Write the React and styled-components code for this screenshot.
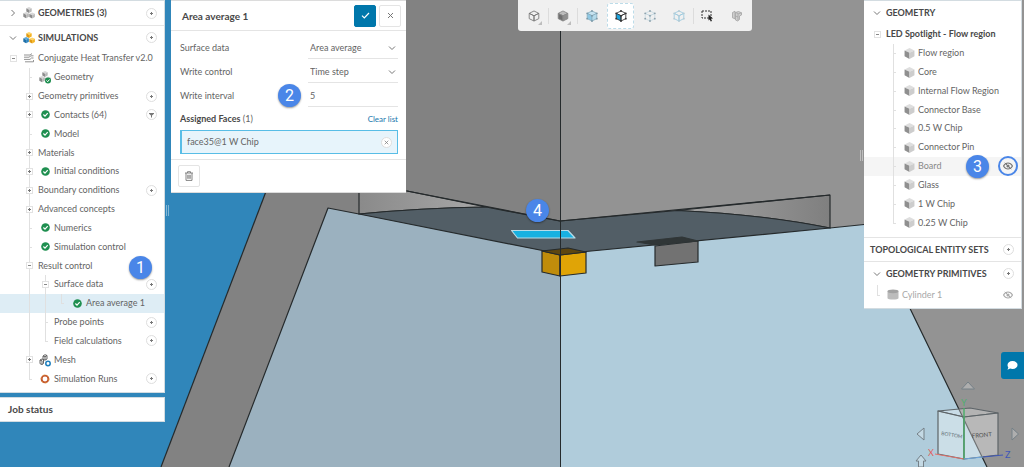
import styled, { createGlobalStyle, css } from 'styled-components'
import { useState } from 'react'

const colors = {
  text: '#646464',
  strong: '#484848',
  line: '#e4e4e4',
  guide: '#e0e0e0',
  accent: '#0077ab',
  badge: '#4a86e8',
  ok: '#1f8f50',
}

const GlobalStyle = createGlobalStyle`
  * {
    box-sizing: border-box;
  }
  body {
    margin: 0;
    font-family: Lato, 'Liberation Sans', sans-serif;
    font-size: 9px;
    line-height: 12px;
    color: ${colors.text};
    background: #3086ba;
  }
  button, input, select {
    font: inherit;
    color: inherit;
    margin: 0;
    padding: 0;
  }
`

const Page = styled.div`
  position: relative;
  display: flex;
  align-items: flex-start;
  min-height: 100vh;
  overflow: hidden;
`

const Scene = styled.svg`
  position: absolute;
  inset: 0;
  width: 100%;
  height: 100%;
`

const Sidebar = styled.aside`
  position: relative;
  flex: none;
  width: 165px;
  display: flex;
  flex-direction: column;
  gap: 4px;
`

const Panel = styled.section`
  position: relative;
  background: #fff;
  border: 0 solid #d3dce1;
  border-width: 1px 1px 1px 0;
`

const TreePanel = styled(Panel)`
  padding-bottom: 4px;
`

const GeometryPanel = styled(Panel)`
  flex: none;
  width: 158px;
  margin-right: 2px;
  padding-bottom: 4px;
`

const JobStatus = styled(Panel)`
  height: 25px;
  padding: 5px 8px;
  font-size: 10px;
  font-weight: 700;
  color: ${colors.strong};
`

const SectionHead = styled.header`
  display: flex;
  align-items: center;
  height: 24px;
  padding: 0 7px 0 5px;
  color: ${colors.strong};
  font-weight: 700;
  border-top: ${p => (p.$ruled ? `1px solid ${colors.line}` : 'none')};
`

const SectionTitle = styled.h2`
  flex: 1;
  margin: 0 0 0 1px;
  font-size: 9px;
  font-weight: 700;
  white-space: nowrap;
`

const Rows = styled.ul`
  display: grid;
  grid-auto-rows: 1fr;
  height: ${p => p.$height}px;
  margin: 0;
  padding: 0;
  list-style: none;
  & + header {
    margin-top: 5px;
  }
`

const Row = styled.li`
  position: relative;
  display: flex;
  align-items: stretch;
  min-height: 0;
  padding: 0 7px 0 5px;
  white-space: nowrap;
  font-weight: ${p => (p.$bold ? 700 : 400)};
  color: ${p => (p.$hover ? '#888888' : p.$muted ? '#a8a8a8' : p.$bold ? colors.strong : colors.text)};
  background: ${p => (p.$selected ? '#deedf5' : p.$hover ? '#f5f5f5' : 'none')};
`

const Cell = styled.span`
  position: relative;
  flex: none;
  display: flex;
  align-items: center;
  justify-content: center;
  width: 16px;
  ${p => p.$guide && css`
    &::before {
      content: '';
      position: absolute;
      left: 8px;
      top: 0;
      bottom: ${p.$guide === 'elbow' ? '50%' : 0};
      border-left: 1px solid ${colors.guide};
    }
  `}
  ${p => (p.$guide === 'elbow' || p.$guide === 'tee') && css`
    &::after {
      content: '';
      position: absolute;
      left: 8px;
      top: 50%;
      width: 3px;
      border-top: 1px solid ${colors.guide};
    }
  `}
`

const Label = styled.span`
  flex: 1;
  align-self: center;
  margin-left: 1px;
`

const Expander = styled.button`
  position: relative;
  z-index: 1;
  display: flex;
  align-items: center;
  justify-content: center;
  width: 7px;
  height: 7px;
  border: 1px solid #e2e2e2;
  background: #fff;
`

const RoundButton = styled.button`
  flex: none;
  align-self: center;
  display: flex;
  align-items: center;
  justify-content: center;
  width: 11px;
  height: 11px;
  border: 1px solid #dedede;
  border-radius: 50%;
  background: #fff;
  color: #666;
`

const EyeButton = styled.button`
  flex: none;
  align-self: center;
  display: flex;
  align-items: center;
  justify-content: center;
  width: 12px;
  height: 12px;
  border: none;
  border-radius: 50%;
  background: none;
  color: ${p => (p.$ringed ? '#777' : '#aaa')};
  outline: ${p => (p.$ringed ? `2px solid ${colors.badge}` : 'none')};
  outline-offset: 2px;
`

const ChevronButton = styled.button`
  display: flex;
  align-items: center;
  justify-content: center;
  width: 16px;
  height: 16px;
  border: none;
  background: none;
`

const Badge = styled.span`
  position: absolute;
  z-index: 3;
  left: ${p => p.$left}px;
  top: ${p => p.$top}px;
  width: 23px;
  height: 23px;
  border-radius: 50%;
  background: ${colors.badge};
  box-shadow: 0 1px 2px rgba(0, 0, 0, 0.4);
  color: #fff;
  font: 400 16px/23px Roboto, sans-serif;
  text-align: center;
`

const Splitter = styled.div`
  position: absolute;
  ${p => p.$side}: -4px;
  top: ${p => p.$top}px;
  width: 3px;
  height: 11px;
  border: 0 solid rgba(255, 255, 255, 0.4);
  border-width: 0 1px;
`

const Dialog = styled.form`
  position: relative;
  flex: none;
  width: 235px;
  margin-left: 6px;
  background: #fff;
  border: 1px solid #dcdcdc;
  border-width: 1px 0;
`

const DialogHead = styled.header`
  display: flex;
  align-items: center;
  gap: 3px;
  height: 30px;
  padding: 0 5px 0 11px;
  border-bottom: 1px solid ${colors.line};
`

const DialogTitle = styled.h1`
  flex: 1;
  margin: 0;
  font-size: 10px;
  font-weight: 700;
  color: ${colors.strong};
`

const SquareButton = styled.button`
  display: flex;
  align-items: center;
  justify-content: center;
  width: 22px;
  height: 22px;
  border: 1px solid ${p => (p.$primary ? colors.accent : colors.line)};
  border-radius: 2px;
  background: ${p => (p.$primary ? colors.accent : '#fff')};
  color: ${p => (p.$primary ? '#fff' : '#777')};
`

const Fields = styled.div`
  padding: 5px 8px 0 9px;
`

const Field = styled.div`
  position: relative;
  display: flex;
  align-items: center;
  justify-content: space-between;
  height: 24px;
`

const Control = styled.div`
  position: relative;
  display: flex;
  align-items: center;
  width: 90px;
  height: 22px;
  border-bottom: 1px solid ${colors.line};
  svg {
    position: absolute;
    right: 2px;
    pointer-events: none;
  }
  select, input {
    width: 100%;
    height: 20px;
    padding-left: 2px;
    border: none;
    outline: none;
    background: none;
    appearance: none;
  }
`

const Assigned = styled.div`
  display: flex;
  align-items: center;
  justify-content: space-between;
  height: 22px;
  strong {
    color: ${colors.strong};
  }
`

const ClearLink = styled.a`
  font-size: 8px;
  color: #2077ad;
  text-decoration: none;
`

const Face = styled.div`
  display: flex;
  align-items: center;
  justify-content: space-between;
  height: 24px;
  padding: 0 5px;
  border: 1px solid #58bde6;
  border-left-width: 2px;
  background: #e7f4fb;
`

const DialogFoot = styled.footer`
  margin-top: 5px;
  padding: 5px 7px;
  border-top: 1px solid ${colors.line};
`

const Viewport = styled.main`
  position: relative;
  flex: 1;
  display: flex;
  justify-content: center;
`

const Toolbar = styled.div`
  display: flex;
  align-items: center;
  height: 31px;
  padding: 0 1px;
  border-radius: 0 0 3px 3px;
  background: #f0f0f0;
`

const Tool = styled.button`
  position: relative;
  display: flex;
  align-items: center;
  justify-content: center;
  width: 27px;
  height: 26px;
  margin: 0 1px;
  border: 1px ${p => (p.$active ? 'dashed #bcdce9' : 'solid transparent')};
  border-radius: 3px;
  background: ${p => (p.$active ? '#fff' : 'none')};
  ${p => p.$menu && css`
    &::after {
      content: '';
      position: absolute;
      right: 4px;
      bottom: 3px;
      border: 2px solid #bdbdbd;
      border-top-color: transparent;
      border-left-color: transparent;
    }
  `}
  ${p => p.$split && css`
    &::before {
      content: '';
      position: absolute;
      right: -3px;
      height: 16px;
      border-left: 1px solid #dcdcdc;
    }
  `}
`

const ChatButton = styled.button`
  position: absolute;
  right: 0;
  bottom: 88px;
  display: flex;
  align-items: center;
  justify-content: center;
  width: 23px;
  height: 27px;
  border: none;
  border-radius: 3px 0 0 3px;
  background: ${colors.accent};
`

const ViewCube = styled.svg`
  position: absolute;
  right: 0;
  bottom: 0;
`

const Plus = () => (
  <svg width="5" height="5" viewBox="0 0 5 5" stroke="#777"><path d="M1 2.500H4M2.500 1V4" /></svg>
)

const Minus = () => (
  <svg width="5" height="5" viewBox="0 0 5 5" stroke="#888"><path d="M1 2.500H4" /></svg>
)

const Chevron = ({ right }) => (
  <svg width="8" height="8" viewBox="0 0 8 8" fill="none" stroke="#777" strokeWidth="1">
    <path d={right ? 'M2.500 1L5.500 4L2.500 7' : 'M1 2.500L4 5.500L7 2.500'} />
  </svg>
)

const Cube = ({ x = 0, y = 0, s = 1, tones = ['#d6d6d6', '#8c8c8c', '#b9b9b9'] }) => (
  <g transform={`translate(${x} ${y}) scale(${s})`}>
    <path d="M5 0L9.500 2.200L5 4.400L.5 2.200Z" fill={tones[0]} />
    <path d="M.5 2.200L5 4.400V10L.5 7.600Z" fill={tones[1]} />
    <path d="M9.500 2.200L5 4.400V10L9.500 7.600Z" fill={tones[2]} />
  </g>
)

const PartIcon = () => (
  <svg width="11" height="11" viewBox="0 0 10 10"><Cube tones={['#dedede', '#8f8f8f', '#cdcdcd']} /></svg>
)

const CubesIcon = ({ tones, done }) => (
  <svg width="12" height="12" viewBox="0 0 12 12" overflow="visible">
    <Cube x={3} y={0} s={0.6} tones={tones && tones[0]} />
    <Cube x={0} y={5} s={0.62} tones={tones && tones[1]} />
    <Cube x={6} y={5.4} s={0.62} tones={tones && tones[2]} />
    {done && (
      <g>
        <circle cx="9" cy="9.500" r="3" fill={colors.ok} />
        <path d="M7.500 9.500L8.700 10.700L10.500 8.500" fill="none" stroke="#fff" />
      </g>
    )}
  </svg>
)

const blues = ['#5ba9d6', '#1f6fa8', '#2f86c0']
const yellows = ['#ffd467', '#e09a12', '#f4b323']

const CheckIcon = () => (
  <svg width="9" height="9" viewBox="0 0 9 9">
    <circle cx="4.500" cy="4.500" r="4.300" fill={colors.ok} />
    <path d="M2.400 4.500L4 6.100L6.700 3.200" fill="none" stroke="#fff" strokeWidth="1.200" />
  </svg>
)

const FlowIcon = () => (
  <svg width="10" height="10" viewBox="0 0 10 10" fill="none" stroke="#777" strokeWidth=".8">
    <path d="M0 2H6L8 .6M0 4.200H5L7 2.800H9.500M0 6.400H6L7.500 5H9.500M1 8.800H9.500V7" />
  </svg>
)

const MeshIcon = () => (
  <svg width="12" height="12" viewBox="0 0 12 12" fill="none" stroke="#555" strokeWidth=".9" overflow="visible">
    <path d="M4 2L6 .7L8 1.500V5L6 6.200L4 5.400ZM4 2L6 2.800L8 1.500M6 2.800V6M1 6L3 5L4.500 5.600V9.500L3 10.500L1 9.700ZM1 6L3 6.800V10.500" />
    <circle cx="9" cy="9.500" r="2.200" stroke="#1e7fbd" strokeWidth="1.500" fill="#fff" />
  </svg>
)

const RunsIcon = () => (
  <svg width="10" height="10" viewBox="0 0 10 10" fill="none">
    <circle cx="5" cy="5" r="3.400" stroke="#c4572f" strokeWidth="1.900" />
    <circle cx="5" cy="5" r="4" stroke="#e5a23a" strokeWidth=".7" strokeDasharray="2 2" />
  </svg>
)

const CylinderIcon = () => (
  <svg width="12" height="11" viewBox="0 0 12 11">
    <path d="M.5 2.300V9.200C.5 11 11.500 11 11.500 9.200V2.300Z" fill="#bcbcbc" />
    <ellipse cx="6" cy="2.300" rx="5.500" ry="1.900" fill="#a2a2a2" />
  </svg>
)

const FilterIcon = () => (
  <svg width="5" height="6" viewBox="0 0 6 6" fill="#777"><path d="M0 .5H6V1.500L3.600 3.500V6H2.400V3.500L0 1.500Z" /></svg>
)

const EyeOffIcon = () => (
  <svg width="10" height="8" viewBox="0 0 10 8" fill="none" stroke="currentColor">
    <path d="M.5 4C2 1.500 3.500 1 5 1S8 1.500 9.500 4C8 6.500 6.500 7 5 7S2 6.500 .5 4Z" strokeWidth="1.100" />
    <circle cx="5" cy="4" r="1.600" fill="currentColor" stroke="none" />
    <path d="M1.800 .8L8.200 7.200" />
  </svg>
)

const CloseIcon = ({ size = 7 }) => (
  <svg width={size} height={size} viewBox="0 0 7 7" stroke="#777"><path d="M1 1L6 6M6 1L1 6" /></svg>
)

const TrashIcon = () => (
  <svg width="10" height="10" viewBox="0 0 10 10" fill="none" stroke="#777" strokeWidth=".9">
    <path d="M1 2H9M3.500 2V.7H6.500V2M2 2V9.400H8V2M3.800 3.800V7.800M5 3.800V7.800M6.200 3.800V7.800" />
  </svg>
)

// Cube outline shared by the view and selection modes.
function ToolCube({ stroke, left = 'none', right = 'none', top = 'none', dots }) {
  const corners = [[6, 1], [11, 3.5], [11, 9], [6, 11.5], [1, 9], [1, 3.5], [6, 6]]
  return (
    <svg width="12" height="12" viewBox="0 0 12 12.500">
      <g stroke={stroke} strokeWidth=".9" strokeLinejoin="round">
        <path d="M6 1L11 3.500L6 6L1 3.500Z" fill={top} />
        <path d="M1 3.500L6 6V11.500L1 9Z" fill={left} />
        <path d="M11 3.500L6 6V11.500L11 9Z" fill={right} />
      </g>
      {dots && corners.map(([x, y]) => <circle key={`${x}-${y}`} cx={x} cy={y} r="1" fill={dots} />)}
    </svg>
  )
}

const BoxSelectIcon = () => (
  <svg width="13" height="13" viewBox="0 0 13 13">
    <path d="M1 2H10V9H1Z" fill="none" stroke="#333" strokeDasharray="2 1" />
    <path d="M7.500 5.500L12 9.500L10 9.800L11 12L9.700 12.500L8.800 10.400L7.500 11.500Z" fill="#222" />
  </svg>
)

const HiddenPartsIcon = () => (
  <svg width="12" height="12" viewBox="0 0 12 12" fill="#cfcfcf" stroke="#a3a3a3" strokeWidth=".8">
    <path d="M1.500 2.500L4 1.200V8.800L1.500 7.800Z" />
    <path d="M4.500 2.500L7.500 1.500L10.500 2.800V5L8.500 6V9.500L6.500 11L4.500 10Z" />
    <path d="M4.500 2.500L7.500 3.700L10.500 2.800M7 3.700V10.500M4.500 6L7 7" fill="none" />
  </svg>
)

const tools = [
  { name: 'Wireframe', menu: true, split: true, icon: <ToolCube stroke="#777" /> },
  { name: 'Solid', menu: true, split: true, icon: <ToolCube stroke="#8a8a8a" top="#bdbdbd" left="#6f6f6f" right="#8f8f8f" /> },
  { name: 'Select volumes', icon: <ToolCube stroke="#8ab0c2" top="#c7e3f0" left="#8fc8e4" right="#b4daea" dots="#7e9aa8" /> },
  { name: 'Select faces', icon: <ToolCube stroke="#333" left="#1ba2dc" dots="#333" /> },
  { name: 'Select vertices', icon: <ToolCube stroke="#c8dbe3" dots="#8fa3ad" /> },
  { name: 'Select edges', split: true, icon: <ToolCube stroke="#9ccbe0" dots="#b5cbd5" /> },
  { name: 'Box selection', icon: <BoxSelectIcon /> },
  { name: 'Hide selection', icon: <HiddenPartsIcon /> },
]

const simulation = [
  { label: 'Conjugate Heat Transfer v2.0', guides: [null], toggle: '-', icon: <FlowIcon /> },
  { label: 'Geometry', guides: [null, 'tee'], icon: <CubesIcon done /> },
  { label: 'Geometry primitives', guides: [null, 'tee'], toggle: '+', action: 'add' },
  { label: 'Contacts (64)', guides: [null, 'tee'], toggle: '+', icon: <CheckIcon />, action: 'filter' },
  { label: 'Model', guides: [null, 'tee'], icon: <CheckIcon /> },
  { label: 'Materials', guides: [null, 'tee'], toggle: '+' },
  { label: 'Initial conditions', guides: [null, 'tee'], toggle: '+', icon: <CheckIcon /> },
  { label: 'Boundary conditions', guides: [null, 'tee'], toggle: '+', action: 'add' },
  { label: 'Advanced concepts', guides: [null, 'tee'], toggle: '+' },
  { label: 'Numerics', guides: [null, 'tee'], icon: <CheckIcon /> },
  { label: 'Simulation control', guides: [null, 'tee'], icon: <CheckIcon /> },
  { label: 'Result control', guides: [null, 'tee'], toggle: '-', badge: 1 },
  { label: 'Surface data', guides: [null, 'line', 'tee'], toggle: '-', action: 'add' },
  { label: 'Area average 1', guides: [null, 'line', 'line', 'elbow'], icon: <CheckIcon />, selected: true },
  { label: 'Probe points', guides: [null, 'line', 'tee'], action: 'add' },
  { label: 'Field calculations', guides: [null, 'line', 'elbow'], action: 'add' },
  { label: 'Mesh', guides: [null, 'tee'], toggle: '+', icon: <MeshIcon /> },
  { label: 'Simulation Runs', guides: [null, 'elbow'], icon: <RunsIcon />, action: 'add' },
]

const partNames = ['Flow region', 'Core', 'Internal Flow Region', 'Connector Base', '0.5 W Chip',
  'Connector Pin', 'Board', 'Glass', '1 W Chip', '0.25 W Chip']

const parts = [
  { label: 'LED Spotlight - Flow region', guides: [null], toggle: '-', bold: true },
  ...partNames.map((label, i) => ({
    label,
    guides: [null, i === partNames.length - 1 ? 'elbow' : 'tee'],
    icon: <PartIcon />,
    hover: label === 'Board',
    action: label === 'Board' ? 'show' : undefined,
    ringed: label === 'Board',
    badge: label === 'Board' ? 3 : undefined,
  })),
]

const primitives = [
  { label: 'Cylinder 1', guides: ['elbow'], icon: <CylinderIcon />, muted: true, action: 'show' },
]

const badgeLeft = { 1: 129, 3: 102 }
const badgeTop = { 1: 0, 3: -2 }

function Action({ kind, label, ringed }) {
  if (kind === 'add') return <RoundButton type="button" aria-label={`Add to ${label}`}><Plus /></RoundButton>
  if (kind === 'filter') return <RoundButton type="button" aria-label={`Filter ${label}`}><FilterIcon /></RoundButton>
  if (kind === 'show') return <EyeButton type="button" $ringed={ringed} aria-label={`Show ${label}`}><EyeOffIcon /></EyeButton>
  return null
}

function Tree({ items, height }) {
  return (
    <Rows $height={height}>
      {items.map(item => (
        <Row key={item.label} $selected={item.selected} $hover={item.hover} $muted={item.muted} $bold={item.bold}>
          {item.guides.map((guide, i) => (
            <Cell key={i} $guide={guide}>
              {item.toggle && i === item.guides.length - 1 && (
                <Expander type="button" aria-label={`Toggle ${item.label}`}>
                  {item.toggle === '+' ? <Plus /> : <Minus />}
                </Expander>
              )}
            </Cell>
          ))}
          {item.icon && <Cell>{item.icon}</Cell>}
          <Label>{item.label}</Label>
          <Action kind={item.action} label={item.label} ringed={item.ringed} />
          {item.badge && <Badge $left={badgeLeft[item.badge]} $top={badgeTop[item.badge]}>{item.badge}</Badge>}
        </Row>
      ))}
    </Rows>
  )
}

function Section({ title, collapsed, fixed, icon, add, ruled }) {
  return (
    <SectionHead $ruled={ruled}>
      {!fixed && (
        <ChevronButton type="button" aria-label={`Toggle ${title}`}><Chevron right={collapsed} /></ChevronButton>
      )}
      {icon && <Cell>{icon}</Cell>}
      <SectionTitle>{title}</SectionTitle>
      {add && <Action kind="add" label={title} />}
    </SectionHead>
  )
}

function Model() {
  return (
    <Scene viewBox="0 0 1024 467" preserveAspectRatio="none" aria-hidden="true">
      <defs>
        <linearGradient id="glassLeft">
          <stop offset="0" stopColor="#8a8a8a" />
          <stop offset="1" stopColor="#a8a8a8" />
        </linearGradient>
        <linearGradient id="glassRight">
          <stop offset="0" stopColor="#a6a6a6" />
          <stop offset="1" stopColor="#7f7f7f" />
        </linearGradient>
      </defs>
      <path d="M339 0H560V467H161Z" fill="#828282" />
      <path d="M560 0H1024V467H560Z" fill="#939393" />
      <g stroke="#252a2c" strokeWidth="1.200" strokeLinejoin="round">
        <path d="M339 0L161 467" />
        <path d="M328 208L560 254V467H229Z" fill="#9bb1bf" stroke="none" />
        <path d="M560 254L869 224L987 467H560Z" fill="#b0ccdb" stroke="none" />
        <path d="M229 467L328 208L359 214M830 228L869 224L987 467" fill="none" />
        <path d="M359 188V214Q420 208 486 207L407 191Z" fill="url(#glassLeft)" />
        <path d="M677 210.500L830 195V228Q760 214 677 210.500Z" fill="url(#glassRight)" />
        <path d="M359 214Q420 208 486 207L560 221L677 210.500Q760 214 830 228L560 254Z" fill="#525e66" />
        <path d="M407 191L560 221L830 195" fill="none" />
        <path d="M511.500 230.500H568L575 238H517.500Z" fill="#18b1e1" stroke="#b9dce8" />
        <path d="M542 251L560 255V276L542 272Z" fill="#c08c0b" />
        <path d="M560 255L586 252V273L560 276Z" fill="#e0a406" />
        <path d="M542 251L568 248L586 252L560 255Z" fill="#5e4610" />
        <path d="M655 246L698 241V262L655 266Z" fill="#727272" />
        <path d="M637 242L682 237L698 241L655 245Z" fill="#303637" stroke="#303637" />
        <path d="M560.500 0V467" strokeWidth="1" />
      </g>
    </Scene>
  )
}

function Orientation() {
  return (
    <ViewCube width="110" height="88" viewBox="914 379 110 88">
      <g fill="#fff" fillOpacity=".25" stroke="#758087" strokeWidth="1">
        <path d="M961.500 389L968 382L974.500 389Z" />
        <path d="M924 428V440L917 434Z" />
        <path d="M1012 428V440L1018.500 434Z" />
        <path d="M921 455L926 461H923.500V467H918.500V461H916Z" />
      </g>
      <g fill="#fff" strokeWidth="1.200" stroke="#5d6468" strokeLinejoin="round">
        <path d="M938 411L970 408L998 413L964 417Z" fillOpacity=".3" />
        <path d="M938 411L964 417V459L938 454Z" fillOpacity=".35" />
        <path d="M964 417L998 413V455L964 459Z" fillOpacity=".35" />
      </g>
      <g fontFamily="Lato, sans-serif" fontSize="5" fill="#5d6a72">
        <text transform="translate(941 435) rotate(9)">BOTTOM</text>
        <text fontSize="6" fill="#4c4c4c" transform="translate(972 438) rotate(-5)">FRONT</text>
      </g>
      <g fill="none">
        <path d="M935 454L964 459" stroke="#e0706a" />
        <path d="M964 408V459" stroke="#4fae6d" strokeWidth="1.500" />
        <path d="M964 459L983 457" stroke="#6ea6dd" strokeWidth="1.200" />
        <path d="M983 457L1003 455" stroke="#3f57b8" strokeWidth="1.200" />
      </g>
      <g fontFamily="Lato, sans-serif" fontSize="9">
        <text x="928" y="456" fill="#e0605c">X</text>
        <text x="961" y="406" fill="#4fae6d">Y</text>
        <text x="1005" y="458" fill="#3f57b8">Z</text>
      </g>
    </ViewCube>
  )
}

function AreaAverage() {
  const [average, setAverage] = useState('Area average')
  const [control, setControl] = useState('Time step')
  const [interval, setInterval] = useState('5')

  return (
    <Dialog onSubmit={e => e.preventDefault()}>
      <DialogHead>
        <DialogTitle>Area average 1</DialogTitle>
        <SquareButton $primary aria-label="Apply">
          <svg width="9" height="9" viewBox="0 0 9 9" fill="none" stroke="#fff" strokeWidth="1.200"><path d="M1 4.700L3.300 7L8 2" /></svg>
        </SquareButton>
        <SquareButton type="button" aria-label="Close"><CloseIcon /></SquareButton>
      </DialogHead>
      <Fields>
        <Field>
          <label htmlFor="surface-data">Surface data</label>
          <Control>
            <select id="surface-data" value={average} onChange={e => setAverage(e.target.value)}>
              <option>Area average</option>
            </select>
            <Chevron />
          </Control>
        </Field>
        <Field>
          <label htmlFor="write-control">Write control</label>
          <Control>
            <select id="write-control" value={control} onChange={e => setControl(e.target.value)}>
              <option>Time step</option>
            </select>
            <Chevron />
          </Control>
        </Field>
        <Field>
          <label htmlFor="write-interval">Write interval</label>
          <Badge $left={98} $top={0}>2</Badge>
          <Control>
            <input id="write-interval" value={interval} onChange={e => setInterval(e.target.value)} />
          </Control>
        </Field>
        <Assigned>
          <span><strong>Assigned Faces</strong> (1)</span>
          <ClearLink href="#clear">Clear list</ClearLink>
        </Assigned>
        <Face>
          face35@1 W Chip
          <RoundButton type="button" aria-label="Remove face35@1 W Chip"><CloseIcon size={5} /></RoundButton>
        </Face>
      </Fields>
      <DialogFoot>
        <SquareButton type="button" aria-label="Delete"><TrashIcon /></SquareButton>
      </DialogFoot>
    </Dialog>
  )
}

export default function App() {
  return (
    <Page>
      <GlobalStyle />
      <Model />
      <Sidebar>
        <TreePanel>
          <Section title="GEOMETRIES (3)" collapsed add icon={<CubesIcon />} />
          <Section title="SIMULATIONS" add ruled icon={<CubesIcon tones={[yellows, blues, yellows]} />} />
          <Tree items={simulation} height={339} />
        </TreePanel>
        <JobStatus>Job status</JobStatus>
        <Splitter $side="right" $top={205} />
      </Sidebar>
      <AreaAverage />
      <Viewport>
        <Toolbar>
          {tools.map(tool => (
            <Tool key={tool.name} type="button" aria-label={tool.name} $menu={tool.menu} $split={tool.split} $active={tool.name === 'Select faces'}>
              {tool.icon}
            </Tool>
          ))}
        </Toolbar>
        <Badge $left={120} $top={199}>4</Badge>
      </Viewport>
      <GeometryPanel>
        <Splitter $side="left" $top={149} />
        <Section title="GEOMETRY" />
        <Tree items={parts} height={207} />
        <Section title="TOPOLOGICAL ENTITY SETS" fixed ruled add />
        <Section title="GEOMETRY PRIMITIVES" ruled add />
        <Tree items={primitives} height={19} />
      </GeometryPanel>
      <ChatButton type="button" aria-label="Chat">
        <svg width="11" height="9" viewBox="0 0 11 9" fill="#fff"><path d="M5.500 0C8.500 0 10.500 1.700 10.500 4S8.500 8 5.500 8C4.600 8 3.700 7.800 3 7.500C2.300 8.200 1.300 8.600 .3 8.600C.9 8 1.200 7.200 1.300 6.500C.7 5.800 .5 5 .5 4C.5 1.700 2.500 0 5.500 0Z" /></svg>
      </ChatButton>
      <Orientation />
    </Page>
  )
}
